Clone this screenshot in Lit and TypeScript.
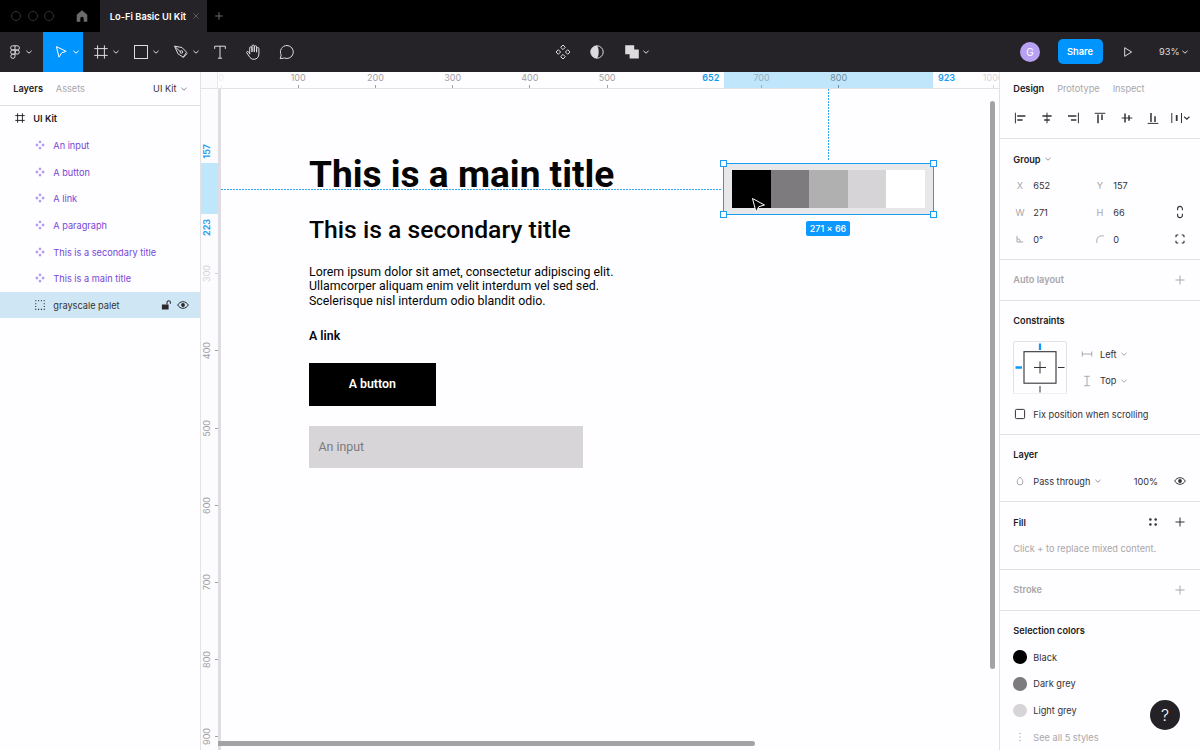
import { LitElement, html, css, svg, SVGTemplateResult } from "lit";
import { customElement } from "lit/decorators.js";
import { styleMap } from "lit/directives/style-map.js";

// Every glyph is drawn on a 20x20 board centred on 10,10.
const GLYPHS: Record<string, SVGTemplateResult> = {
  chevron: svg`<path d="M7.4 8.8 10 11.2 12.6 8.8"/>`,
  home: svg`<path d="M4.700 8.800 10 4.200 15.300 8.800v6.900h-3.600v-3.300a1.700 1.700 0 0 0-3.400 0v3.300H4.700z" fill="currentColor" stroke="none"/>`,
  close: svg`<path d="m7.200 7.200 5.600 5.600M12.800 7.200l-5.600 5.600"/>`,
  plus: svg`<path d="M10 5.500v9M5.500 10h9"/>`,
  plusSmall: svg`<path d="M10 6.200v7.600M6.200 10h7.600"/>`,
  figma: svg`<path d="M10 3.800H7.700a2.100 2.100 0 0 0 0 4.200H10zM10 3.800h2.300a2.100 2.100 0 0 1 0 4.200H10M10 8H7.700a2.100 2.100 0 0 0 0 4.200H10zM10 12.200H7.700A2.100 2.100 0 1 0 10 14.300z"/><circle cx="12.200" cy="10.100" r="2.100"/>`,
  move: svg`<path d="M5.400 4.600 15.200 9.400 10.700 10.800 8 15.200z" stroke-linejoin="round"/>`,
  frame: svg`<path d="M6.600 3.300v13.400M13.400 3.300v13.400M3.300 6.600h13.400M3.300 13.400h13.400"/>`,
  rect: svg`<rect x="3.500" y="3.500" width="13" height="13"/>`,
  pen: svg`<path d="M3.600 4.200 11 5.500 15.600 10.200 12.200 15.200 7 11.800z M3.600 4.200l5.800 5.600M12 15.700l4.300-4.300"/><circle cx="10.400" cy="10" r="1.300"/>`,
  text: svg`<path d="M4.700 6.900V4.200h10.600v2.700M10 4.200v12M7.900 16.200h4.200"/>`,
  hand: svg`<path d="M6.700 11.800V5.900a1.150 1.150 0 0 1 2.300 0V9.500M9 9.500V4.200a1.150 1.150 0 0 1 2.300 0V9.500M11.300 9.500V4.900a1.150 1.150 0 0 1 2.300 0V9.800M13.600 9.800V6.700a1.150 1.150 0 0 1 2.300 0V12c0 3-1.900 5.300-4.900 5.300-2.500 0-3.800-1.200-5-3.200L3.800 10.900c-.7-1.100.9-2.100 1.700-1.100l1.200 1.700" stroke-linecap="round" stroke-linejoin="round"/>`,
  comment: svg`<path d="M10 3.500a6.500 6.500 0 1 1-2.700 12.500L3.200 16.700l1-3.600A6.500 6.500 0 0 1 10 3.500z" stroke-linejoin="round"/>`,
  components: svg`<path d="m10 3 2.300 2.300L10 7.600 7.700 5.300zM10 12.400l2.300 2.300L10 17l-2.300-2.300zM5.300 7.700 7.600 10l-2.300 2.300L3 10zM14.700 7.700 17 10l-2.300 2.300L12.400 10z"/>`,
  mask: svg`<circle cx="10" cy="10" r="6.200"/><path d="M10 3.800a6.200 6.200 0 0 0 0 12.400c1.200-1.500 1.700-3.600 1.700-6.200S11.200 5.300 10 3.800z" fill="currentColor" stroke="none"/>`,
  union: svg`<path d="M3.200 3.200h9v4.400h4.600v9H7.600v-4.400H3.200z" fill="currentColor" stroke="none"/>`,
  play: svg`<path d="M6.700 5.700 13.600 10 6.700 14.300z" stroke-linejoin="round"/>`,
  alignLeft: svg`<path d="M5.400 4.700v10.600"/><path d="M7.200 8h8.200M7.200 12h5.400" stroke-width="1.500"/>`,
  alignHCenter: svg`<path d="M10 4.700v10.600"/><path d="M5.400 8h9.200M7.200 12h5.600" stroke-width="1.500"/>`,
  alignRight: svg`<path d="M15.400 4.700v10.600"/><path d="M5 8h8.400M8 12h5.400" stroke-width="1.500"/>`,
  alignTop: svg`<path d="M4.700 5.300h10.600"/><path d="M8 6.600v8.700M12 6.600v5.400" stroke-width="1.500"/>`,
  alignVCenter: svg`<path d="M4.700 10h10.600"/><path d="M8 5.400v9.200M12 7.200v5.600" stroke-width="1.500"/>`,
  alignBottom: svg`<path d="M4.700 15.400h10.600"/><path d="M8 5v9M12 8.200V14" stroke-width="1.500"/>`,
  tidy: svg`<path d="M1.800 5v10M11.500 5v10"/><path d="M6.700 7v6" stroke-width="1.800"/><path d="m14.200 8.800 2.600 2.400 2.600-2.400" stroke-width="1.200"/>`,
  component: svg`<path d="m10 5.200 1.700 1.700L10 8.600 8.300 6.900zM10 11.400l1.700 1.700-1.700 1.700-1.700-1.700zM6.900 8.300 8.600 10l-1.700 1.700L5.200 10zM13.100 8.300 14.800 10l-1.700 1.700-1.700-1.700z" fill="currentColor" stroke="none"/>`,
  layerFrame: svg`<path d="M7.600 5.300v9.400M12.400 5.300v9.400M5.300 7.600h9.400M5.300 12.400h9.400"/>`,
  group: svg`<path d="M5.200 5.800h1.100M8 5.800h1.100M10.900 5.800H12M13.700 5.800h1.100M5.200 14.400h1.100M8 14.400h1.100M10.900 14.400H12M13.700 14.400h1.100M5.200 8.700h1.100M5.200 11.500h1.100M13.700 8.700h1.100M13.700 11.500h1.100" stroke-width="1.100"/>`,
  unlock: svg`<path d="M5.900 9.500h6.700V14.500H5.900z" fill="currentColor" stroke="none"/><path d="M11 9.500V7.500a1.700 1.700 0 0 1 3.400 0v1.300" stroke-width="1.100"/>`,
  eye: svg`<path d="M4.700 10c1.200-2.100 3.100-3.300 5.300-3.300s4.100 1.200 5.300 3.300c-1.200 2.100-3.100 3.300-5.300 3.300S5.900 12.100 4.700 10z"/><circle cx="10" cy="10" r="1.900" fill="currentColor" stroke="none"/>`,
  link: svg`<path d="M7.600 8.300V6.800a2.400 2.400 0 0 1 4.800 0v1.500M7.600 11.700v1.500a2.400 2.400 0 0 0 4.800 0v-1.500" stroke-width="1.100"/>`,
  corners: svg`<path d="M6 8.300V6.900a.9.900 0 0 1 .9-.9h1.400M11.700 6h1.400a.9.900 0 0 1 .9.900v1.400M14 11.700v1.400a.9.900 0 0 1-.9.900h-1.400M8.300 14H6.900a.9.900 0 0 1-.9-.9v-1.400" stroke-width="1.200"/>`,
  angle: svg`<path d="M7 6.800V13h6.200M7 9.600A3.400 3.400 0 0 1 10.400 13"/>`,
  radius: svg`<path d="M6.800 13.800V11.500a4.700 4.700 0 0 1 4.700-4.700h2.300"/>`,
  horizontal: svg`<path d="M5.300 7.500v5M14.700 7.500v5M5.300 10h9.400"/>`,
  vertical: svg`<path d="M7.200 5.300h5.600M7.200 14.700h5.600M10 5.300v9.400"/>`,
  drop: svg`<path d="M10 6c1.700 2 2.900 3.300 2.900 5a2.900 2.900 0 0 1-5.800 0c0-1.700 1.200-3 2.900-5z"/>`,
  styles: svg`<g fill="currentColor" stroke="none"><circle cx="7.400" cy="7.500" r="1.300"/><circle cx="12.700" cy="7.500" r="1.300"/><circle cx="7.400" cy="12.500" r="1.300"/><circle cx="12.700" cy="12.500" r="1.300"/></g>`,
  more: svg`<g fill="currentColor" stroke="none"><circle cx="10" cy="6.500" r=".7"/><circle cx="10" cy="10" r=".7"/><circle cx="10" cy="13.500" r=".7"/></g>`,
  checkbox: svg`<rect x="5.400" y="5.400" width="9.200" height="9.200" rx="1"/>`,
};

const glyph = (name: string, cls = "") =>
  html`<svg class="glyph ${cls}" viewBox="0 0 20 20">${GLYPHS[name]}</svg>`;

const sharedStyles = css`
  * {
    box-sizing: border-box;
  }
  .glyph {
    display: block;
    flex: none;
    width: 20px;
    height: 20px;
    fill: none;
    stroke: currentColor;
    stroke-width: 1;
    overflow: visible;
  }
`;

@customElement("window-bar")
class WindowBar extends LitElement {
  static styles = [
    sharedStyles,
    css`
      :host {
        display: flex;
        height: 32px;
        background: #000;
        color: #6c6a6d;
        align-items: stretch;
      }
      .lights {
        display: flex;
        gap: 6.700px;
        align-items: center;
        padding-left: 11px;
        width: 71.500px;
      }
      .light {
        width: 10px;
        height: 10px;
        border: 1px solid #343236;
        border-radius: 50%;
      }
      .home {
        display: flex;
        align-items: center;
        width: 28.500px;
      }
      .tab {
        display: flex;
        align-items: center;
        width: 107px;
        padding-left: 9.800px;
        background: #252327;
        color: #fff;
        font-weight: 600;
        font-size: 9.300px;
        white-space: nowrap;
      }
      .tab-name {
        width: 76px;
      }
      .dim {
        color: #59575b;
      }
      .add {
        display: flex;
        align-items: center;
        padding-left: 2px;
      }
    `,
  ];
  render() {
    return html`
      <div class="lights"><i class="light"></i><i class="light"></i><i class="light"></i></div>
      <div class="home">${glyph("home")}</div>
      <div class="tab"><span class="tab-name">Lo-Fi Basic UI Kit</span>${glyph("close", "dim")}</div>
      <div class="add">${glyph("plusSmall")}</div>
    `;
  }
}

@customElement("tool-bar")
class ToolBar extends LitElement {
  static styles = [
    sharedStyles,
    css`
      :host {
        display: grid;
        grid-template-columns: 1fr auto 1fr;
        height: 39.670px;
        background: #252327;
        color: #dddbde;
        font-size: 9.600px;
      }
      .group {
        display: flex;
      }
      .tool {
        display: flex;
        align-items: center;
        justify-content: center;
        width: 33.330px;
      }
      .menu {
        width: 40px;
        justify-content: flex-start;
        padding-left: 8.200px;
      }
      .main {
        width: 43.300px;
        padding-left: 5px;
      }
      .active {
        padding-left: 7.400px;
      }
      .menu .glyph + .glyph {
        margin-left: -5.300px;
      }
      .main .glyph + .glyph {
        margin-left: -6.500px;
      }
      .active {
        background: #0094ff;
        color: #fff;
      }
      .active .glyph + .glyph {
        margin-left: -4.800px;
      }
      .end {
        justify-content: flex-end;
        align-items: center;
      }
      .avatar {
        width: 20px;
        height: 20px;
        border-radius: 50%;
        background: #b8a0f2;
        color: #fff;
        line-height: 20px;
        text-align: center;
        font-size: 10px;
        margin-right: 17.500px;
      }
      .share {
        width: 45px;
        height: 25px;
        border-radius: 5px;
        background: #0094ff;
        color: #fff;
        line-height: 25px;
        text-align: center;
        font-weight: 600;
        font-size: 9.300px;
        margin-right: 15px;
      }
      .zoom {
        margin-left: 21.500px;
        width: 15.500px;
        font-size: 9.300px;
        white-space: nowrap;
      }
      .end .last {
        margin-right: 5.500px;
      }
    `,
  ];
  render() {
    const menu = (name: string, cls = "") =>
      html`<div class="tool menu ${cls}">${glyph(name)}${glyph("chevron")}</div>`;
    const tool = (name: string) => html`<div class="tool">${glyph(name)}</div>`;
    return html`
      <div class="group">
        ${menu("figma", "main")}${menu("move", "active")}${menu("frame")}${menu("rect")}${menu("pen")}
        ${tool("text")}${tool("hand")}${tool("comment")}
      </div>
      <div class="group">${tool("components")}${tool("mask")}${menu("union")}</div>
      <div class="group end">
        <div class="avatar">G</div>
        <div class="share">Share</div>
        ${glyph("play")}
        <span class="zoom">93%</span>
        ${glyph("chevron", "last")}
      </div>
    `;
  }
}

@customElement("layers-panel")
class LayersPanel extends LitElement {
  static styles = [
    sharedStyles,
    css`
      :host {
        display: block;
        border-right: 1px solid #e2e1e4;
        background: #fefdff;
      }
      .tabs {
        display: flex;
        align-items: center;
        height: 34.300px;
        padding: 1px 6.500px 0 13.300px;
        border-bottom: 1px solid #e2e1e4;
      }
      .current {
        font-weight: 600;
        color: #222024;
        width: 42.500px;
      }
      .muted {
        color: #a9a7aa;
      }
      .page {
        margin-left: auto;
      }
      .tabs .glyph {
        margin-left: -3px;
        color: #8d8b8f;
      }
      .list {
        margin-top: -.8px;
      }
      .row {
        display: flex;
        align-items: center;
        height: 26.670px;
        padding: 0 6.700px 0 30px;
        gap: 3.300px;
        color: #7747d8;
        white-space: nowrap;
      }
      .row .glyph {
        color: #b39bee;
      }
      .root {
        padding-left: 10px;
        font-weight: 600;
        color: #222024;
      }
      .selected {
        background: #cfe7f5;
        color: #333136;
      }
      .row.root .glyph,
      .row.selected .glyph {
        color: #2b292d;
      }
      .name {
        flex: 1;
        padding-top: .6px;
      }
      .unlock {
        margin-right: -6px;
      }
    `,
  ];
  render() {
    const components = ["An input", "A button", "A link", "A paragraph", "This is a secondary title", "This is a main title"];
    return html`
      <div class="tabs">
        <span class="current">Layers</span><span class="muted">Assets</span>
        <span class="page">UI Kit</span>${glyph("chevron")}
      </div>
      <div class="list">
        <div class="row root">${glyph("layerFrame")}<span class="name">UI Kit</span></div>
        ${components.map((name) => html`<div class="row">${glyph("component")}<span class="name">${name}</span></div>`)}
        <div class="row selected">
          ${glyph("group")}<span class="name">grayscale palet</span>${glyph("unlock", "unlock")}${glyph("eye")}
        </div>
      </div>
    `;
  }
}

@customElement("design-canvas")
class DesignCanvas extends LitElement {
  static styles = [
    sharedStyles,
    css`
      :host {
        display: grid;
        position: relative;
        grid-template-columns: 17px 1fr;
        grid-template-rows: 17.330px 1fr;
        overflow: hidden;
        background: #fefdff;
        color: #a3a1a5;
        font-size: 9px;
      }
      .corner {
        background: #fbfafc;
        border-right: 1px solid #e8e7ea;
        border-bottom: 1px solid #e2e1e4;
      }
      .ruler-x {
        position: relative;
        display: flex;
        overflow: hidden;
        border-bottom: 1px solid #e2e1e4;
        padding-left: 3px;
      }
      .ruler-y {
        position: relative;
        display: flex;
        flex-direction: column;
        overflow: hidden;
        background: #fcfbfd;
      }
      .mark-x {
        position: relative;
        flex: none;
        width: 77.220px;
        margin-left: -38.610px;
        margin-right: 38.610px;
        text-align: center;
        line-height: 12px;
        display: flex;
        flex-direction: column;
        align-items: center;
        justify-content: space-between;
      }
      .mark-x::after {
        content: "";
        width: 1px;
        height: 3px;
        background: currentColor;
      }
      .mark-y {
        position: relative;
        flex: none;
        height: 77.220px;
        display: flex;
        align-items: center;
        justify-content: space-between;
      }
      .mark-y::after {
        content: "";
        height: 1px;
        width: 3px;
        background: currentColor;
      }
      .mark-y:first-child {
        margin-top: -8.400px;
      }
      .turned {
        writing-mode: vertical-rl;
        transform: rotate(180deg);
        line-height: 11px;
      }
      .hidden {
        visibility: hidden;
      }
      .pale {
        color: #d6d4d8;
      }
      .faint {
        color: #eeecf0;
      }
      .on-range {
        color: #92b2c4;
      }
      .on-range-strong {
        color: #74909f;
      }
      .range-x {
        position: absolute;
        left: 506px;
        top: 0;
        width: 209px;
        height: 17px;
        background: #bfe6fa;
      }
      .range-y {
        position: absolute;
        top: 74.500px;
        left: 0;
        width: 16.500px;
        height: 51px;
        background: #bfe6fa;
      }
      .bound {
        position: absolute;
        color: #169bf0;
        font-weight: 600;
        line-height: 12px;
      }
      .bound-left {
        right: 279.700px;
        top: 0;
      }
      .bound-right {
        left: 720px;
        top: 0;
      }
      .bound-top {
        top: 55.500px;
        left: 0;
      }
      .bound-bottom {
        top: 130px;
        left: 0;
      }
      .board {
        position: relative;
        border-left: 3px solid #dfdde1;
      }
      .frame {
        position: absolute;
        left: 88px;
        top: 64px;
        width: 310px;
        color: #050505;
        font-family: Roboto, sans-serif;
        font-size: 12.360px;
        display: flex;
        flex-direction: column;
        align-items: flex-start;
        white-space: nowrap;
      }
      .title {
        margin: 0;
        font-size: 37.070px;
        line-height: 43px;
        font-weight: 700;
      }
      .subtitle {
        margin: 19.500px 0 0;
        font-size: 24.710px;
        line-height: 29px;
        font-weight: 500;
      }
      .copy {
        margin: 20.200px 0 0;
        line-height: 14.480px;
      }
      .link {
        margin-top: 21.300px;
        line-height: 14.500px;
        font-weight: 600;
      }
      .button {
        margin-top: 19px;
        width: 126.500px;
        height: 43px;
        line-height: 43px;
        text-align: center;
        background: #000;
        color: #fff;
        font-weight: 600;
      }
      .input {
        margin-top: 20px;
        width: 274px;
        height: 42.500px;
        line-height: 42.500px;
        padding-left: 9.500px;
        background: #d7d5d8;
        color: #7c7a7d;
      }
      .guide-x {
        position: absolute;
        left: 0;
        top: 100px;
        width: 501px;
        height: 1px;
        background: repeating-linear-gradient(90deg, #2fa9ee 0 2px, transparent 2px 3px);
      }
      .guide-y {
        position: absolute;
        left: 607px;
        top: 0;
        width: 1px;
        height: 72px;
        background: repeating-linear-gradient(#2fa9ee 0 2px, transparent 2px 3px);
      }
      .selection {
        position: absolute;
        left: 502px;
        top: 74px;
        width: 211px;
        height: 52px;
        border: 1px solid #1a9df2;
        background: #e8e7e9;
        padding: 5.700px 8.200px 6px 8px;
      }
      .swatches {
        display: flex;
        height: 38.600px;
      }
      .swatch {
        flex: 1;
      }
      .handle {
        position: absolute;
        width: 7px;
        height: 7px;
        border: 1px solid #1a9df2;
        background: #fff;
      }
      .nw { left: -4px; top: -4px; }
      .ne { right: -4px; top: -4px; }
      .sw { left: -4px; bottom: -4px; }
      .se { right: -4px; bottom: -4px; }
      .size {
        position: absolute;
        left: 82px;
        top: 57px;
        width: 44px;
        height: 15px;
        border-radius: 2px;
        background: #0d99ff;
        color: #fff;
        font-weight: 500;
        line-height: 15px;
        text-align: center;
        white-space: nowrap;
      }
      .pointer {
        position: absolute;
        left: 530px;
        top: 108px;
        width: 16px;
        height: 18px;
      }
      .bar-y {
        position: absolute;
        left: 789px;
        top: 29px;
        width: 5px;
        height: 568.500px;
        border-radius: 3px;
        background: #a4a2a5;
      }
      .bar-x {
        position: absolute;
        left: 17px;
        top: 669px;
        width: 537px;
        height: 5px;
        border-radius: 0 3px 3px 0;
        background: #a4a2a5;
      }
    `,
  ];
  render() {
    const colsX: [string, string][] = [
      ["0", "faint"], ["100", ""], ["200", ""], ["300", ""], ["400", ""], ["500", ""], ["600", "hidden"],
      ["700", "on-range"], ["800", "on-range-strong"], ["900", "hidden"], ["1000", "pale"],
    ];
    const rowsY: [string, string][] = [
      ["100", "hidden"], ["200", "hidden"], ["300", "pale"], ["400", ""], ["500", ""],
      ["600", ""], ["700", ""], ["800", ""], ["900", ""],
    ];
    const shades = ["#000000", "#7d7b7e", "#b0b0b1", "#d6d4d7", "#ffffff"];
    return html`
      <div class="corner"></div>
      <div class="ruler-x">
        <div class="range-x"></div>
        ${colsX.map(([v, c]) => html`<span class="mark-x ${c}">${v}</span>`)}
        <span class="bound bound-left">652</span>
        <span class="bound bound-right">923</span>
      </div>
      <div class="ruler-y">
        ${rowsY.map(([v, c]) => html`<div class="mark-y ${c}"><span class="turned">${v}</span></div>`)}
        <div class="range-y"></div>
        <span class="bound bound-top turned">157</span>
        <span class="bound bound-bottom turned">223</span>
      </div>
      <div class="board">
        <div class="frame">
          <h1 class="title">This is a main title</h1>
          <h2 class="subtitle">This is a secondary title</h2>
          <p class="copy">
            Lorem ipsum dolor sit amet, consectetur adipiscing elit.<br />
            Ullamcorper aliquam enim velit interdum vel sed sed.<br />
            Scelerisque nisl interdum odio blandit odio.
          </p>
          <span class="link">A link</span>
          <div class="button">A button</div>
          <div class="input">An input</div>
        </div>
        <div class="guide-x"></div>
        <div class="guide-y"></div>
        <div class="selection">
          <div class="swatches">
            ${shades.map((s) => html`<i class="swatch" style=${styleMap({ background: s })}></i>`)}
          </div>
          <i class="handle nw"></i><i class="handle ne"></i><i class="handle sw"></i><i class="handle se"></i>
          <span class="size">271 × 66</span>
        </div>
        <svg class="pointer" viewBox="0 0 16 18">
          <path d="M1.500 1.500 13.500 8 7.800 9.700 5 15z" fill="#000" stroke="#fff" stroke-width="1" stroke-linejoin="round" />
        </svg>
      </div>
      <div class="bar-y"></div>
      <div class="bar-x"></div>
    `;
  }
}

@customElement("design-panel")
class DesignPanel extends LitElement {
  static styles = [
    sharedStyles,
    css`
      :host {
        display: block;
        position: relative;
        border-left: 1px solid #e2e1e4;
        background: #fefdff;
        overflow: hidden;
      }
      .tabs {
        display: flex;
        align-items: center;
        gap: 13px;
        height: 33.330px;
        padding-left: 13.300px;
        color: #a9a7aa;
      }
      .section {
        padding: 6.670px 6.670px 6.500px;
        border-bottom: 1px solid #e2e1e4;
      }
      .top {
        padding-top: 0;
      }
      .last {
        border: 0;
      }
      .row {
        display: grid;
        grid-template-columns: repeat(7, 26.670px);
        height: 26.670px;
        align-items: center;
        white-space: nowrap;
      }
      .row > .glyph,
      .key {
        justify-self: center;
      }
      .key,
      .soft,
      .muted {
        color: #a9a7aa;
      }
      .strong {
        font-weight: 600;
        color: #222024;
      }
      .half {
        font-weight: 600;
      }
      .heading {
        grid-column: 1 / 6;
        padding-left: 6.670px;
        display: flex;
        align-items: center;
      }
      .value {
        grid-column: span 2;
        display: flex;
        align-items: center;
      }
      .value .glyph,
      .heading .glyph {
        margin-left: -2.500px;
        color: #9a989c;
      }
      .wide {
        grid-column: 2 / 8;
      }
      .c4 { grid-column: 4; }
      .c6 { grid-column: 6; }
      .c7 { grid-column: 7; }
      .percent {
        grid-column: 5 / 7;
        padding-left: 20.500px;
      }
      .mode {
        grid-column: 2 / 5;
      }
      .constraints {
        display: flex;
        padding: 6.670px 0 6.670px 6.670px;
      }
      .box {
        width: 54px;
        height: 53.340px;
      }
      .pins {
        padding-left: 6px;
      }
      .pin {
        display: grid;
        grid-template-columns: 26.670px auto 20px;
        justify-content: start;
        align-items: center;
        height: 26.670px;
      }
      .pin .glyph:first-child {
        justify-self: center;
      }
      .pin .glyph:last-child {
        margin-left: -2.500px;
      }
      .dot {
        justify-self: center;
        width: 13.600px;
        height: 13.600px;
        border-radius: 50%;
      }
      .help {
        position: absolute;
        right: 20px;
        top: 628.300px;
        width: 30px;
        height: 30px;
        border-radius: 50%;
        background: #242226;
        color: #fff;
        font-size: 16px;
        font-weight: 300;
        line-height: 30px;
        text-align: center;
      }
    `,
  ];
  render() {
    const aligns = ["alignLeft", "alignHCenter", "alignRight", "alignTop", "alignVCenter", "alignBottom", "tidy"];
    const colors = [["Black", "#000000"], ["Dark grey", "#7d7b7e"], ["Light grey", "#d6d4d7"]];
    const key = (k: string) => html`<span class="key">${k}</span>`;
    const val = (v: string) => html`<span class="value">${v}</span>`;
    return html`
      <div class="tabs"><span class="strong">Design</span><span>Prototype</span><span>Inspect</span></div>
      <div class="section top"><div class="row">${aligns.map((a) => glyph(a))}</div></div>

      <div class="section">
        <div class="row"><span class="heading strong">Group${glyph("chevron")}</span></div>
        <div class="row">${key("X")}${val("652")}<span class="key c4">Y</span>${val("157")}</div>
        <div class="row">${key("W")}${val("271")}<span class="key c4">H</span>${val("66")}${glyph("link", "c7")}</div>
        <div class="row">
          ${glyph("angle", "soft")}${val("0°")}${glyph("radius", "soft c4")}${val("0")}${glyph("corners", "c7")}
        </div>
      </div>

      <div class="section">
        <div class="row"><span class="heading half muted">Auto layout</span>${glyph("plus", "soft c7")}</div>
      </div>

      <div class="section">
        <div class="row"><span class="heading strong">Constraints</span></div>
        <div class="constraints">
          <svg class="box" viewBox="0 0 54 53.340" fill="none" stroke="#333136">
            <rect x=".5" y=".5" width="53" height="52.500" rx="1.500" stroke="#e2e1e4" />
            <rect x="11" y="10.700" width="32" height="31.500" fill="#fff" stroke-width="1.100" />
            <path d="M27 20.500v12M21 26.500h12M45 26.500h6.500M27 45v6.500" />
            <path d="M2.500 26.500H9M27 2.500V9" stroke="#0d99ff" stroke-width="2.300" />
          </svg>
          <div class="pins">
            <div class="pin">${glyph("horizontal", "soft")}<span>Left</span>${glyph("chevron", "soft")}</div>
            <div class="pin">${glyph("vertical", "soft")}<span>Top</span>${glyph("chevron", "soft")}</div>
          </div>
        </div>
        <div class="row">${glyph("checkbox")}<span class="wide">Fix position when scrolling</span></div>
      </div>

      <div class="section">
        <div class="row"><span class="heading strong">Layer</span></div>
        <div class="row">
          ${glyph("drop", "soft")}<span class="value mode">Pass through${glyph("chevron")}</span>
          <span class="percent">100%</span>${glyph("eye", "c7")}
        </div>
      </div>

      <div class="section">
        <div class="row"><span class="heading strong">Fill</span>${glyph("styles", "c6")}${glyph("plus", "c7")}</div>
        <div class="row"><span class="heading muted">Click + to replace mixed content.</span></div>
      </div>

      <div class="section">
        <div class="row"><span class="heading half muted">Stroke</span>${glyph("plus", "soft c7")}</div>
      </div>

      <div class="section last">
        <div class="row"><span class="heading strong">Selection colors</span></div>
        ${colors.map(
          ([name, c]) => html`
            <div class="row"><i class="dot" style=${styleMap({ background: c })}></i><span class="wide">${name}</span></div>
          `
        )}
        <div class="row muted">${glyph("more")}<span class="wide">See all 5 styles</span></div>
      </div>
      <div class="help">?</div>
    `;
  }
}

@customElement("app-root")
class AppRoot extends LitElement {
  static styles = css`
    :host {
      display: flex;
      flex-direction: column;
      width: 1200px;
      height: 750px;
      overflow: hidden;
      background: #fefdff;
      color: #333136;
      font-family: Inter, sans-serif;
      font-size: 9.200px;
      line-height: 13px;
    }
    .workspace {
      flex: 1;
      min-height: 0;
      display: grid;
      grid-template-columns: 201px 798px 201px;
    }
  `;
  render() {
    return html`
      <window-bar></window-bar>
      <tool-bar></tool-bar>
      <div class="workspace">
        <layers-panel></layers-panel>
        <design-canvas></design-canvas>
        <design-panel></design-panel>
      </div>
    `;
  }
}
